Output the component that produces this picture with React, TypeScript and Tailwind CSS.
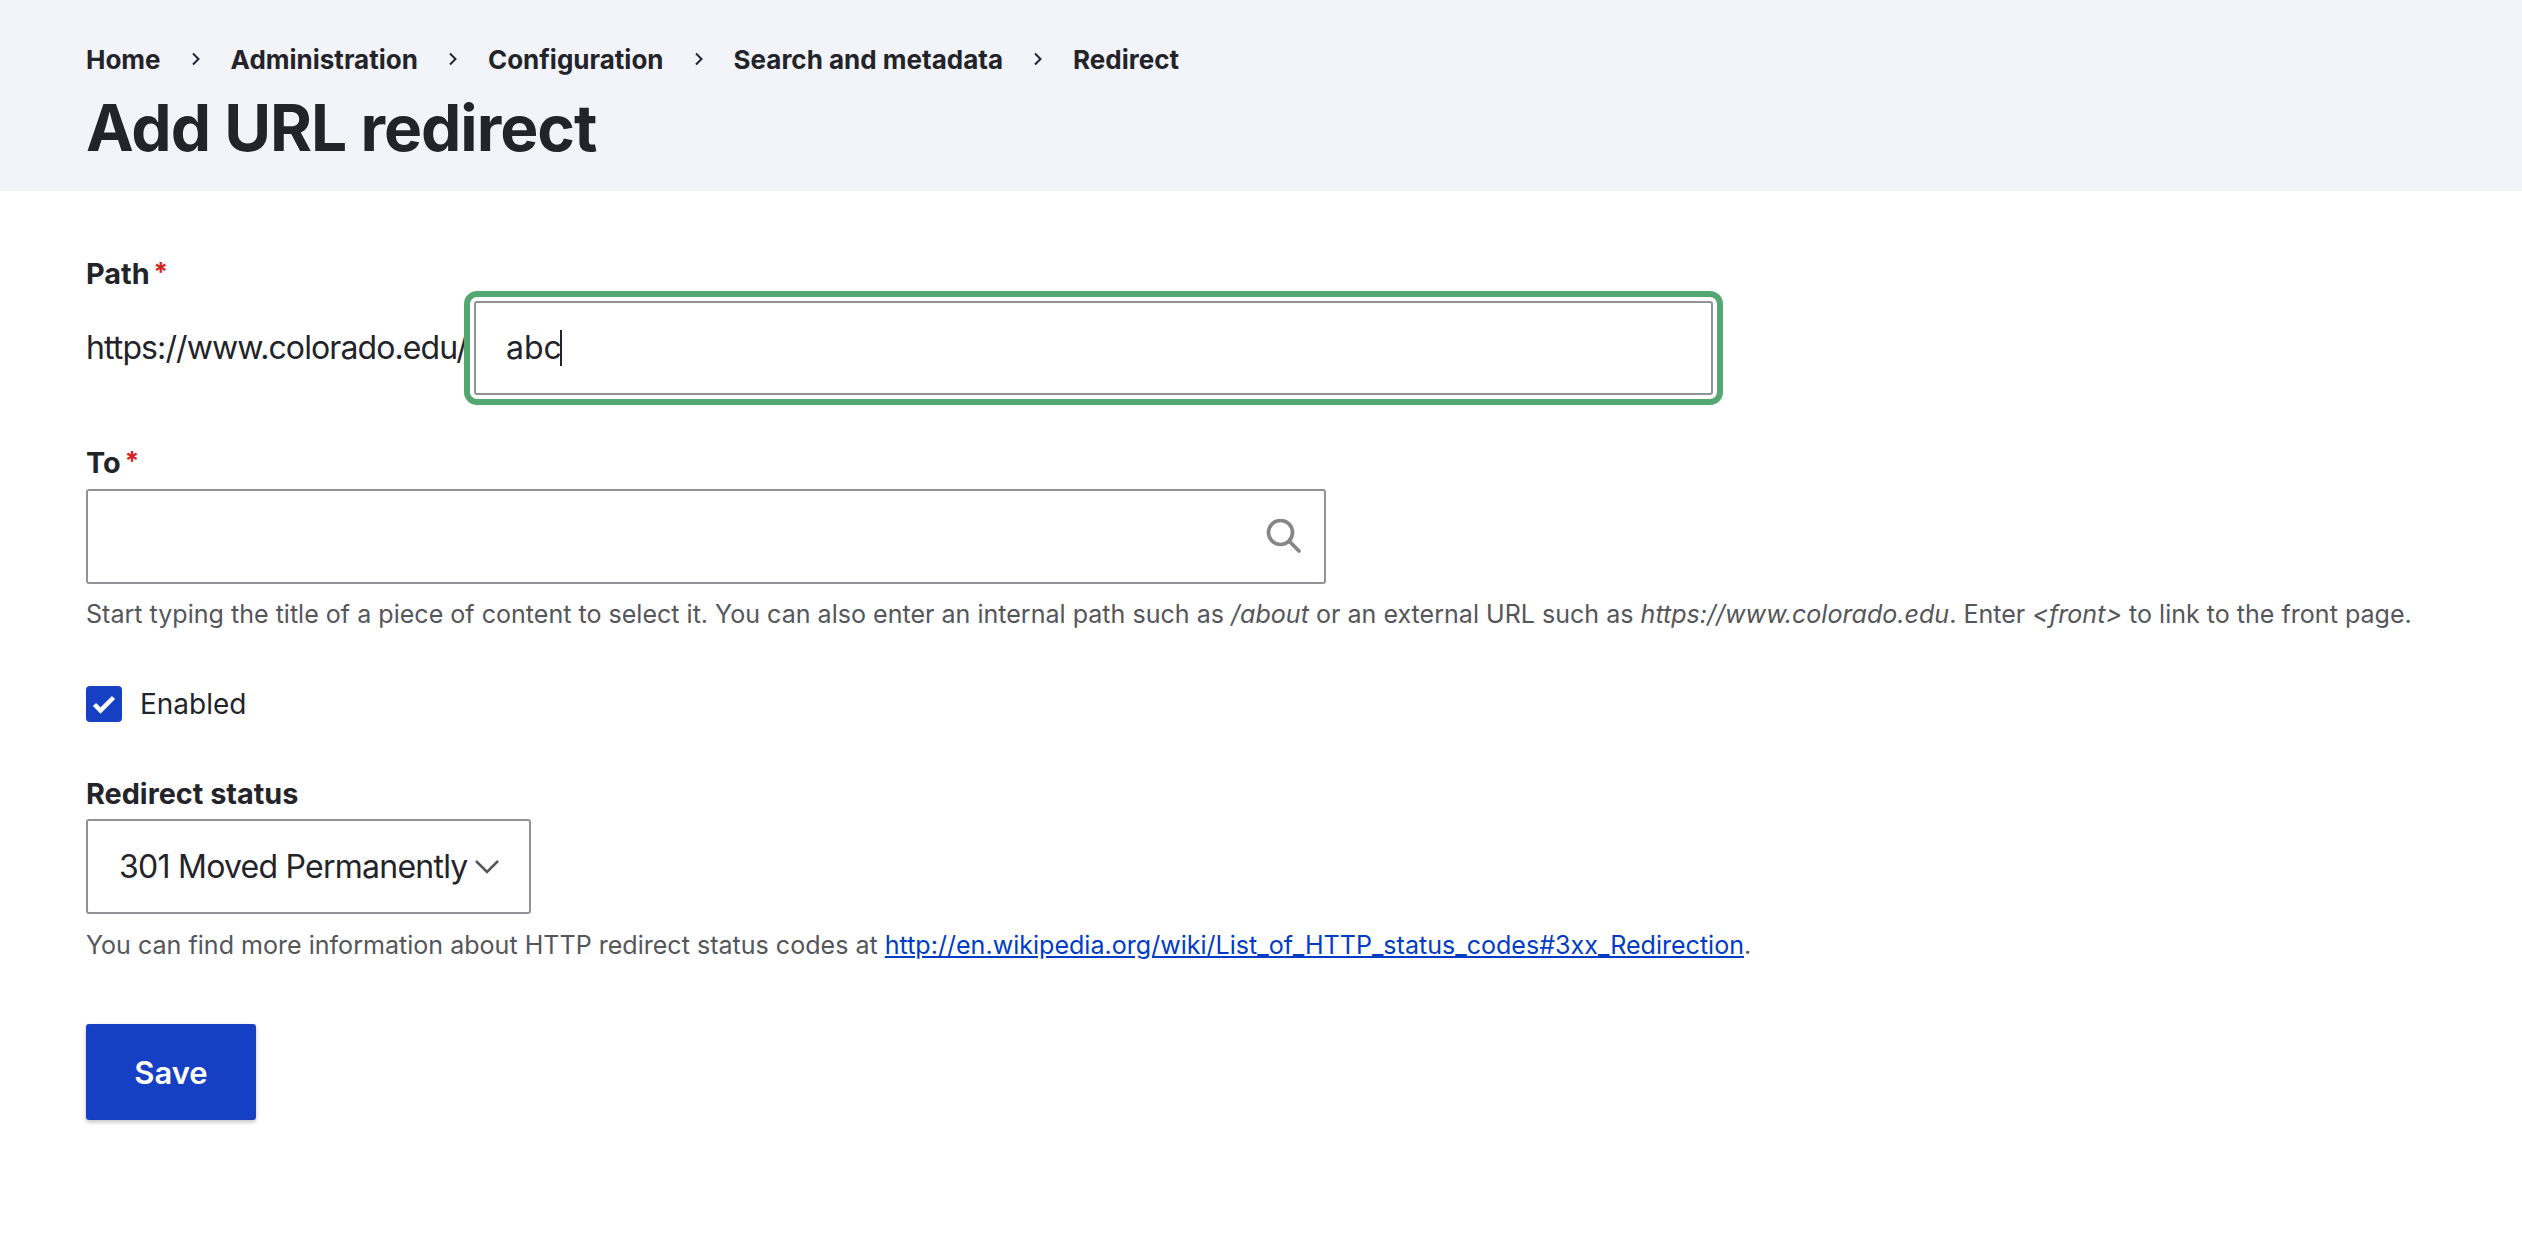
import React from "react";

const crumbs = ["Home", "Administration", "Configuration", "Search and metadata", "Redirect"];

function Chevron() {
  return (
    <svg width="10" height="16" viewBox="0 0 10 16" className="mx-[30px]" fill="none">
      <path d="M2 2.5 L7.5 8 L2 13.5" stroke="#222330" strokeWidth="2" />
    </svg>
  );
}

export default function App() {
  return (
    <div className="min-h-[1252px] bg-white text-[#232429] font-['Inter',sans-serif]">
      <header className="h-[191px] bg-[#f3f4f9] pl-[86px] pt-[43px]">
        <nav className="flex items-center h-[32px] text-[26px] font-bold">
          {crumbs.map((c, i) => (
            <React.Fragment key={c}>
              {i > 0 && <Chevron />}
              <span>{c}</span>
            </React.Fragment>
          ))}
        </nav>
        <h1 className="mt-[15px] text-[64px] leading-[76px] font-bold tracking-[-1px]">Add URL redirect</h1>
      </header>
      <main className="pl-[86px] pr-[20px] pt-[67px]">
        <label className="flex items-center h-[32px] text-[28.8px] font-bold">
          Path<span className="ml-[4px] text-[#d72222] text-[26px] -mt-[6px]">*</span>
        </label>
        <div className="mt-[11px] flex items-center">
          <span className="w-[380px] text-[32px] tracking-[-0.9px] whitespace-nowrap">https://www.colorado.edu/</span>
          <div className="w-[1239px] h-[94px] ml-[8px] rounded-[3px] border-2 border-[#919297] bg-white pl-[30px] flex items-center text-[32px] outline-[6px] outline-offset-[4px] outline-[#53a770]">
            abc<span className="inline-block w-[2px] h-[36px] -ml-[2px] bg-[#222330]" />
          </div>
        </div>
        <label className="mt-[52px] flex items-center h-[32px] text-[28.8px] font-bold">
          To<span className="ml-[4px] text-[#d72222] text-[26px] -mt-[6px]">*</span>
        </label>
        <div className="mt-[10px] w-[1240px] h-[95px] rounded-[3px] border-2 border-[#919297] flex items-center justify-end pr-[22px]">
          <svg width="36" height="36" viewBox="0 0 36 36" fill="none" stroke="#868686" strokeWidth="3.7">
            <circle cx="14.5" cy="13.5" r="12" />
            <path d="M23.5 22.5 L33 32" strokeLinecap="round" />
          </svg>
        </div>
        <p className="mt-[12px] text-[25.07px] leading-[36px] text-[#55565b]">
          Start typing the title of a piece of content to select it. You can also enter an internal path such as <em>/about</em> or an external URL such as <em>https://www.colorado.edu</em>. Enter <em>&lt;front&gt;</em> to link to the front page.
        </p>
        <div className="mt-[50px] flex items-center">
          <span className="w-[36px] h-[36px] rounded-[4px] bg-[#1540c4] flex items-center justify-center">
            <svg width="36" height="36" viewBox="0 0 36 36" fill="none">
              <path d="M8.5 18.5 L14.5 24.5 L27.5 11.5" stroke="white" strokeWidth="4.5" />
            </svg>
          </span>
          <span className="ml-[18px] text-[28px] pt-[1px]">Enabled</span>
        </div>
        <label className="mt-[53px] block h-[32px] leading-[32px] text-[28.8px] font-bold">Redirect status</label>
        <div className="mt-[9px] w-[445px] h-[95px] rounded-[3px] border-2 border-[#919297] flex items-center pl-[31px] text-[32px] tracking-[-0.75px]">
          <span className="whitespace-nowrap">301 Moved Permanently</span>
          <svg width="26" height="16" viewBox="0 0 26 16" fill="none" className="ml-[6px]">
            <path d="M2 2 L13 13 L24 2" stroke="#55565b" strokeWidth="2.5" />
          </svg>
        </div>
        <p className="mt-[13px] text-[25.07px] leading-[36px] text-[#55565b]">
          You can find more information about HTTP redirect status codes at <a className="text-[#003cc5] underline">http://en.wikipedia.org/wiki/List_of_HTTP_status_codes#3xx_Redirection</a>.
        </p>
        <button className="mt-[61px] w-[170px] h-[96px] pt-[2px] rounded-[3px] bg-[#1540c4] text-white text-[31px] font-semibold shadow-[0_2px_4px_rgba(0,0,0,0.25)]">Save</button>
      </main>
    </div>
  );
}
